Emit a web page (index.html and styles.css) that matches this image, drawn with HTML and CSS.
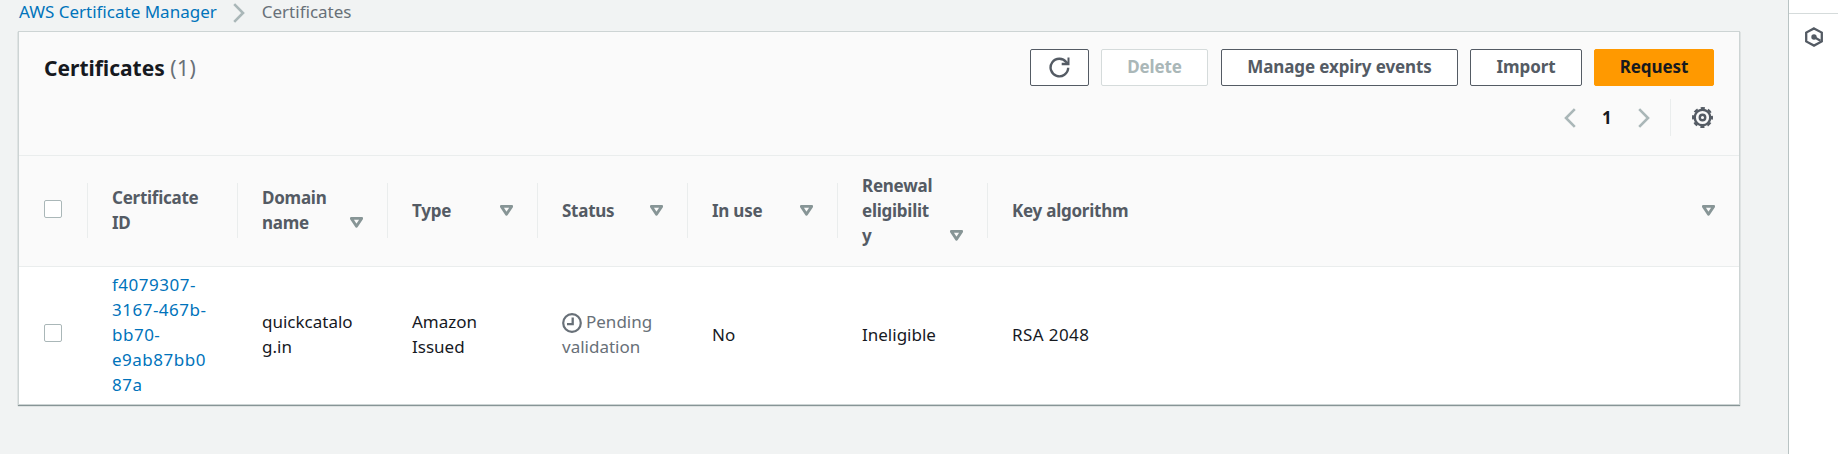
FILE: index.html
```
<!DOCTYPE html>
<html lang="en">
<head>
<meta charset="utf-8">
<title>Certificates</title>
<link rel="stylesheet" href="styles.css">
</head>
<body>
<svg class="defs" aria-hidden="true">
  <symbol id="sort" viewBox="0 0 12 10"><path d="M1.2 1.2h9.6L6 8.5z" fill="none" stroke="#879596" stroke-width="2.6" stroke-linejoin="round"/></symbol>
  <symbol id="right" viewBox="0 0 12 20"><path d="M1.2 1.2 10 10 1.2 18.8" fill="none" stroke="#aab7b8" stroke-width="2.6"/></symbol>
  <symbol id="left" viewBox="0 0 12 20"><path d="M10.8 1.2 2 10l8.8 8.8" fill="none" stroke="#aab7b8" stroke-width="2.6"/></symbol>
</svg>
<div class="app">
  <main class="main">
    <nav class="crumbs">
      <a href="#">AWS Certificate Manager</a>
      <svg class="chevron"><use href="#right"/></svg>
      <span>Certificates</span>
    </nav>
    <section class="card">
      <header class="card-head">
        <div class="title-row">
          <h1>Certificates <span>(1)</span></h1>
          <div class="actions">
            <button class="btn refresh" aria-label="Refresh"><svg viewBox="0 0 21 21"><path d="M19.2 10.8A8.8 8.8 0 1 1 17.4 5.2" fill="none" stroke="#545b64" stroke-width="2.4"/><path d="M18.5.6h2v7.6h-7.800V5.800h3.200l2.600-1.300z" fill="#545b64"/></svg></button>
            <button class="btn delete" disabled>Delete</button>
            <button class="btn manage">Manage expiry events</button>
            <button class="btn import">Import</button>
            <button class="btn request">Request</button>
          </div>
        </div>
        <div class="pager">
          <svg class="chevron"><use href="#left"/></svg>
          <b>1</b>
          <svg class="chevron"><use href="#right"/></svg>
          <span class="rule"></span>
          <svg class="gear" viewBox="-10 -10 20 20"><circle r="7.4" fill="none" stroke="#545b64" stroke-width="2.3"/><circle r="9" fill="none" stroke="#545b64" stroke-width="2" stroke-dasharray="4 3.069" stroke-dashoffset="2"/><circle r="2.6" fill="none" stroke="#545b64" stroke-width="2.3"/></svg>
        </div>
      </header>
      <div class="row head">
        <div class="check"><i></i></div>
        <div class="cell"><span>Certificate<br>ID</span></div>
        <div class="cell low1"><span>Domain<br>name</span><svg class="sort"><use href="#sort"/></svg></div>
        <div class="cell"><span>Type</span><svg class="sort"><use href="#sort"/></svg></div>
        <div class="cell"><span>Status</span><svg class="sort"><use href="#sort"/></svg></div>
        <div class="cell"><span>In use</span><svg class="sort"><use href="#sort"/></svg></div>
        <div class="cell low2"><span>Renewal<br>eligibilit<br>y</span><svg class="sort"><use href="#sort"/></svg></div>
        <div class="cell"><span>Key algorithm</span><svg class="sort"><use href="#sort"/></svg></div>
      </div>
      <div class="row body">
        <div class="check"><i></i></div>
        <div class="cell"><a class="id" href="#">f4079307-<br>3167-467b-<br>bb70-<br>e9ab87bb0<br>87a</a></div>
        <div class="cell"><span>quickcatalo<br>g.in</span></div>
        <div class="cell"><span>Amazon<br>Issued</span></div>
        <div class="cell"><span class="pending"><svg viewBox="0 0 20 20"><g fill="none" stroke="#687078"><circle cx="10" cy="10" r="8.8" stroke-width="2.2"/><path d="M10.7 4.6v6.6H5" stroke-width="2.3"/></g></svg>Pending<br>validation</span></div>
        <div class="cell"><span>No</span></div>
        <div class="cell"><span>Ineligible</span></div>
        <div class="cell"><span class="algo">RSA 2048</span></div>
      </div>
    </section>
  </main>
  <aside class="rail">
    <div class="slot top"><svg viewBox="0 0 20 20"><circle cx="10" cy="10" r="8.7" fill="none" stroke="#545b64" stroke-width="2.4"/></svg></div>
    <div class="slot"><svg viewBox="0 0 18 20"><path d="M9 1.4 16.8 5.6v8.800L9 18.6 1.2 14.4V5.6z" fill="none" stroke="#545b64" stroke-width="2.3"/><circle cx="9" cy="10" r="2.700" fill="#545b64"/><path d="M9 10l6.500 3.800" stroke="#545b64" stroke-width="2.2"/></svg></div>
  </aside>
</div>
</body>
</html>
```
FILE: styles.css
```
* { box-sizing: border-box; }
body {
  margin: 0;
  background: #f1f3f3;
  color: #16191f;
  font: 17px/25px "Noto Sans", "Open Sans", sans-serif;
  overflow: hidden;
}
svg { display: block; flex: none; }
a { color: #0073bb; text-decoration: none; }
.defs { display: none; }
.app { display: flex; height: 454px; }
.main { flex: 1; padding-left: 19px; padding-right: 49px; }
.chevron { width: 12px; height: 20px; }

.crumbs { display: flex; align-items: center; height: 32px; padding-bottom: 9px; color: #687078; }
.crumbs .chevron { margin: 2px 17px 0 16px; }

.card {
  height: 372px;
  background: #fff;
  box-shadow: 0 0 0 1px #cdd4d4, 0 1px 1px 1px #879596, 0 -1px 0 0 #eaeded;
}
.card-head { height: 123px; padding: 17px 25px 0 25px; background: #fafafa; }
.title-row { display: flex; justify-content: space-between; align-items: center; height: 37px; }
h1 { margin: 0; font-size: 21px; line-height: 30px; font-weight: 700; }
h1 span { font-weight: 400; color: #687078; letter-spacing: 0.4px; }

.actions { display: flex; }
.btn {
  display: flex;
  align-items: center;
  justify-content: center;
  height: 37px;
  margin-left: 12px;
  padding: 0 0 2px;
  border: 1px solid #545b64;
  border-radius: 2px;
  background: #fff;
  color: #545b64;
  font: 700 17px/25px "Noto Sans", "Open Sans", sans-serif;
  letter-spacing: -0.1px;
}
.refresh { width: 59px; padding: 0; }
.refresh svg { width: 21px; height: 21px; }
.delete { width: 107px; border-color: #d5dbdb; color: #aab7b8; }
.manage { width: 237px; margin-left: 13px; }
.import { width: 112px; }
.request { width: 120px; border-color: #f90; background: #f90; color: #16191f; }

.pager { display: flex; align-items: center; justify-content: flex-end; height: 37px; margin-top: 13px; padding-right: 1px; }
.pager b { width: 10px; margin: -1px 26px 0; }
.pager .rule { width: 1px; height: 37px; margin: 0 21px 0 20px; background: #eaeded; }
.gear { width: 21px; height: 21px; }

.row { display: grid; grid-template-columns: 68px repeat(6, 150px) 1fr; }
.head {
  height: 112px;
  padding-bottom: 2px;
  border-top: 1px solid #eaeded;
  border-bottom: 1px solid #eaeded;
  background: #fafafa;
  color: #545b64;
  font-weight: 700;
  letter-spacing: -0.25px;
}
.check { display: flex; align-items: center; padding: 0 0 2px 25px; }
.check i { width: 18px; height: 18px; border: 1px solid #aab7b8; border-radius: 2px; background: #fff; }
.cell { display: flex; align-items: center; justify-content: space-between; padding: 0 24px 0 25px; }
.head .cell { background: linear-gradient(#eaeded, #eaeded) 0 27px / 1px 55px no-repeat; }
.head .sort { width: 13px; height: 11px; }
.head .low1 .sort { margin-top: 25px; }
.head .low2 .sort { margin-top: 50px; }

.body { height: 137px; padding-bottom: 3px; }
.body .id { letter-spacing: 0.5px; }
.pending { color: #687078; }
.pending svg { display: inline-block; width: 20px; height: 20px; margin-right: 4px; vertical-align: -5px; }
.algo { letter-spacing: 0.4px; }

.rail { width: 50px; border-left: 1px solid #b9c3c3; background: #fff; }
.slot { display: flex; justify-content: center; padding-top: 13px; }
.slot.top { align-items: flex-end; height: 14px; padding: 0 0 12px; border-bottom: 1px solid #d5dbdb; }
.slot svg { width: 18px; height: 20px; }
```
